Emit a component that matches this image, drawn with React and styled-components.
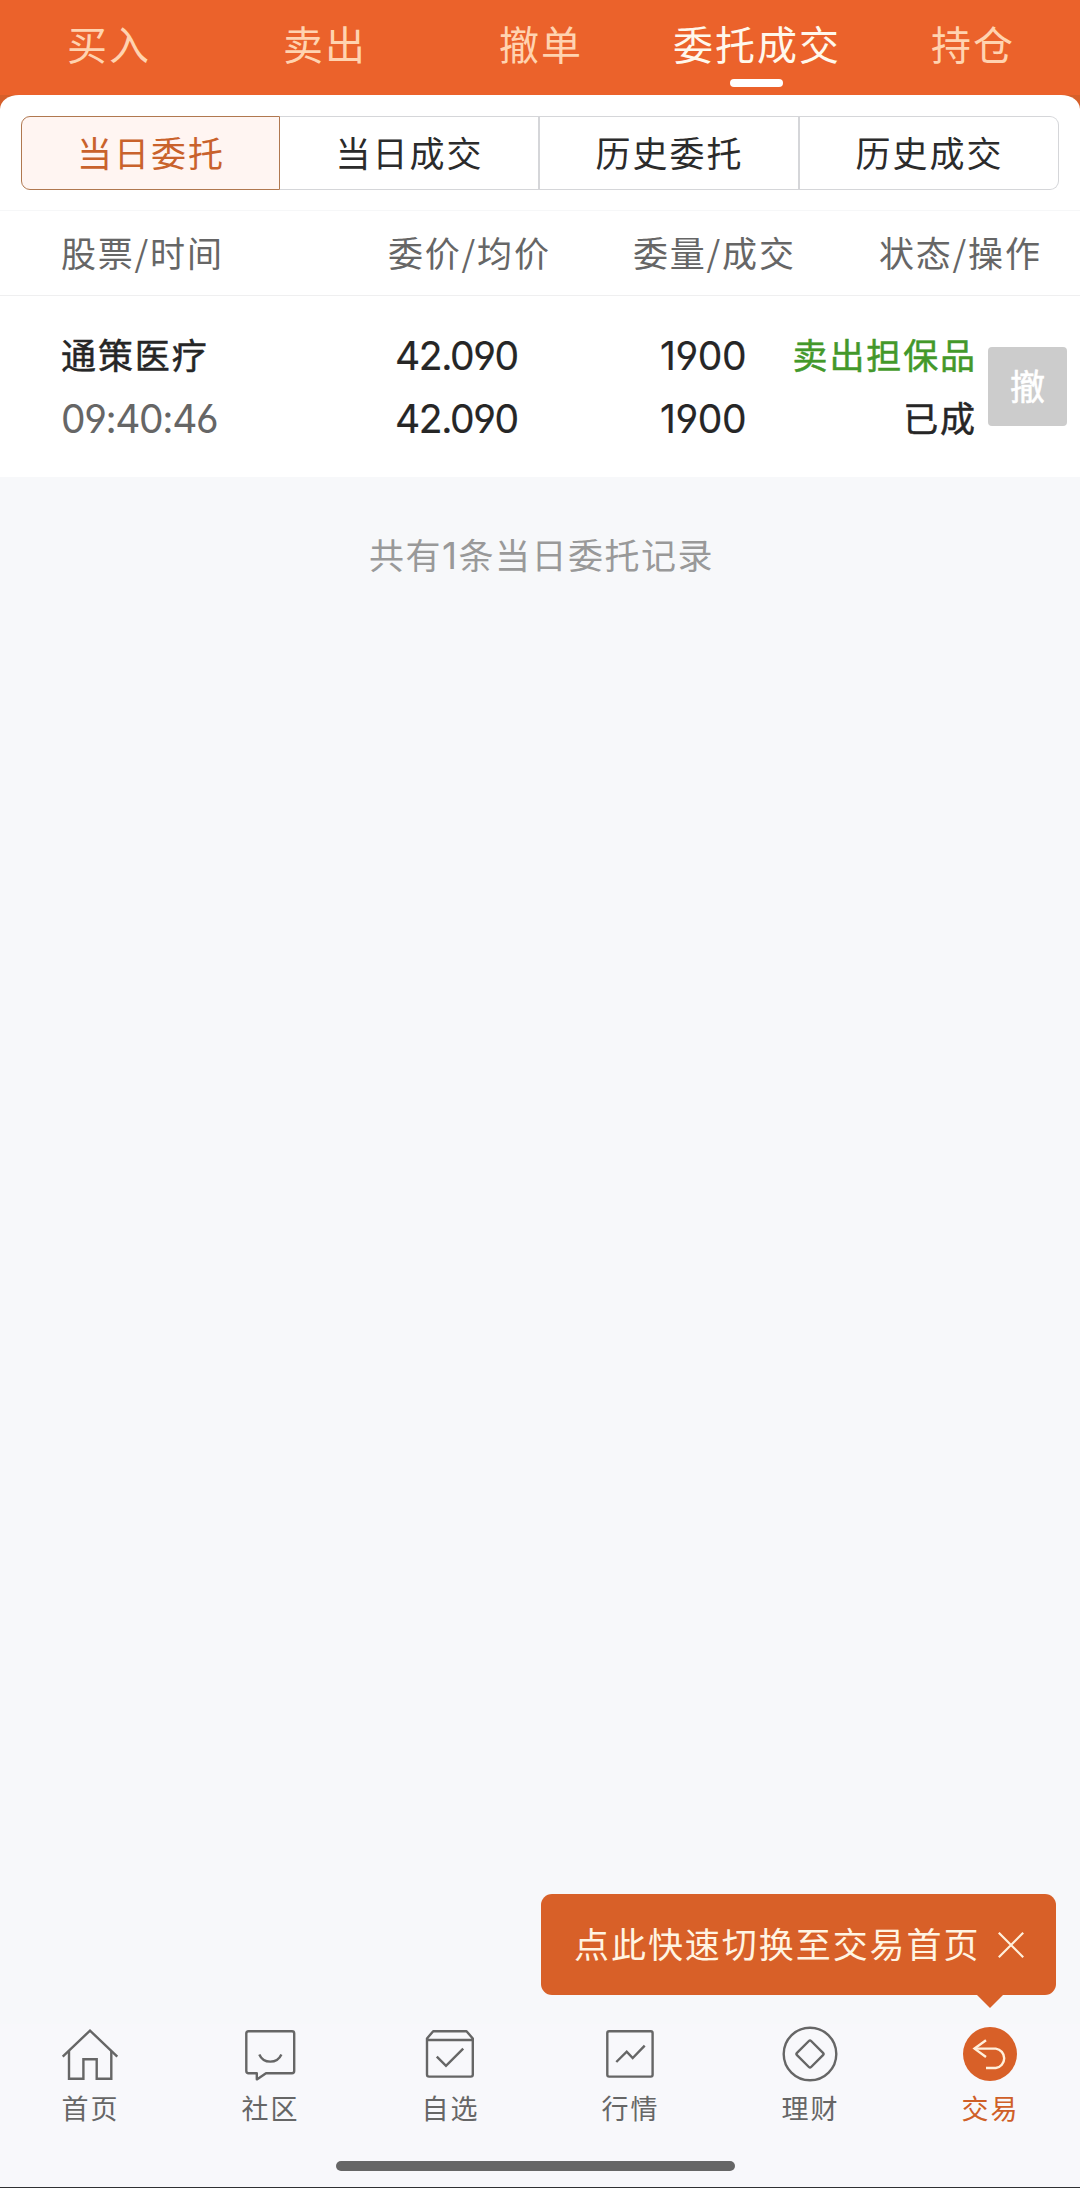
import React, { useState } from 'react'
import styled, { createGlobalStyle } from 'styled-components'

const GlobalStyle = createGlobalStyle`
    * {
        box-sizing: border-box;
    }

    body {
        margin: 0;
        background-color: #f7f8fa;
        font-family: "Noto Sans CJK SC", sans-serif;
    }
`

const Page = styled.div`
    display: flex;
    flex-direction: column;
    width: 1080px;
    height: 2188px;
    overflow: hidden;
    background-color: #f7f8fa;
    border-bottom: 1px solid #303133;
`

const TopTabs = styled.nav`
    display: grid;
    grid-template-columns: repeat(5, 1fr);
    height: 95px;
    background-color: #eb622b;
`

const TopTab = styled.button`
    display: flex;
    flex-direction: column;
    align-items: center;
    border: 0;
    padding: 13px 0 0;
    background: none;
    color: ${({ $active }) => ($active ? '#fff8ec' : '#ffd3b0')};
    font: 400 40px/60px "Noto Sans CJK SC", sans-serif;
    letter-spacing: 2px;
    white-space: nowrap;

    span {
        padding-left: 2px;
    }

    &::after {
        content: '';
        width: 53px;
        height: 8px;
        margin-top: 6px;
        border-radius: 4px;
        background-color: ${({ $active }) => ($active ? '#fff' : 'transparent')};
    }
`

const SheetBack = styled.div`
    background: linear-gradient(#d65f2a 14px, #fff 14px);
`

const Sheet = styled.main`
    height: 382px;
    padding-top: 21px;
    border-radius: 19px 19px 0 0 / 14px 14px 0 0;
    background-color: #fff;
`

const Segments = styled.div`
    display: grid;
    grid-template-columns: 259px 260px 260px 259px;
    height: 74px;
    margin: 0 21px 20px;
`

const Segment = styled.button`
    border: 1px solid ${({ $active }) => ($active ? '#b07850' : '#d5d6d9')};
    border-left-width: ${({ $first }) => ($first ? '1px' : '0')};
    border-right-width: ${({ $first, $last }) => ($first || $last ? '1px' : '2px')};
    border-radius: ${({ $first, $last }) => ($first ? '9px 0 0 9px' : $last ? '0 9px 9px 0' : '0')};
    padding: 0 0 3px 1px;
    background-color: ${({ $active }) => ($active ? '#fff5f2' : '#fff')};
    color: ${({ $active }) => ($active ? '#c9622c' : '#2b2b2b')};
    font: 400 35px/52px "Noto Sans CJK SC", sans-serif;
    letter-spacing: 2px;
`

const TableHead = styled.div`
    display: grid;
    grid-template-columns: 327px 245px 246px 1fr;
    align-items: center;
    height: 86px;
    padding: 0 0 3px 61px;
    border-top: 1px solid #f6f7f8;
    border-bottom: 1px solid #efeff0;
    color: #666;
    font-size: 35px;
    line-height: 52px;
    letter-spacing: 1.8px;
    white-space: nowrap;
`

const OrderRow = styled.div`
    display: grid;
    grid-template-columns: 334px 265px 1fr auto 79px;
    padding: 26px 13px 0 61px;
`

const Cell = styled.div`
    display: flex;
    flex-direction: column;
    align-items: ${({ $right }) => ($right ? 'flex-end' : 'flex-start')};
    padding-right: ${({ $right }) => ($right ? '11px' : '0')};
`

const Label = styled.span`
    height: 63px;
    color: ${({ $color }) => $color || '#262626'};
    font-size: 35px;
    line-height: 63px;
    letter-spacing: 1.9px;
    -webkit-text-stroke: 0.5px currentColor;
    white-space: nowrap;
`

const Figure = styled.span`
    height: 63px;
    padding-top: 2px;
    color: ${({ $muted }) => ($muted ? '#666' : '#262626')};
    font-family: Inter, sans-serif;
    font-feature-settings: "cv03", "cv04";
    font-size: 39px;
    font-weight: 400;
    -webkit-text-stroke: ${({ $muted }) => ($muted ? '0' : '0.2px currentColor')};
    line-height: 63px;
    letter-spacing: ${({ $tight }) => ($tight ? '-1.4px' : '-0.4px')};
    white-space: nowrap;
`

const CancelButton = styled.button`
    align-self: start;
    width: 79px;
    height: 79px;
    margin-top: 25px;
    border: 0;
    border-radius: 4px;
    padding: 0 0 4px;
    background-color: #ccc;
    color: #fff;
    font: 400 35px/52px "Noto Sans CJK SC", sans-serif;
    -webkit-text-stroke: 0.6px currentColor;
`

const Summary = styled.p`
    margin: 51px 0 0;
    padding-left: 3px;
    color: #999;
    font-size: 35px;
    line-height: 52px;
    letter-spacing: 1.5px;
    text-align: center;

    span {
        font-family: Inter, sans-serif;
        font-size: 37px;
        line-height: 1;
    }
`

const Footer = styled.footer`
    display: flex;
    flex-direction: column;
    margin-top: auto;
    background-color: #f8f8fb;
`

const Tip = styled.div`
    position: absolute;
    top: 1894px;
    left: 541px;
    display: flex;
    align-items: center;
    width: 515px;
    height: 101px;
    padding: 0 32px 0 33px;
    border-radius: 11px;
    background-color: #d86028;
    color: #fff4e2;

    &::after {
        content: '';
        position: absolute;
        top: 100px;
        left: 435px;
        border: 14px solid transparent;
        border-top-color: #d86028;
        border-bottom: 0;
    }
`

const TipText = styled.span`
    flex: 1;
    padding-bottom: 3px;
    font-size: 35px;
    line-height: 52px;
    letter-spacing: 1.95px;
    white-space: nowrap;
`

const BottomNav = styled.nav`
    display: grid;
    grid-template-columns: repeat(6, 1fr);
    height: 137px;
`

const NavItem = styled.a`
    display: flex;
    flex-direction: column;
    align-items: center;
    color: ${({ $active }) => ($active ? '#cf5f28' : '#666')};
    font-size: 27px;
    line-height: 40px;
    letter-spacing: 2px;

    span {
        padding: 4px 0 0 1px;
    }
`

const Icon = styled.svg`
    width: 60px;
    height: 60px;
    fill: none;
    stroke: #666;
    stroke-width: 2.4;
`

const HomeIndicator = styled.div`
    width: 399px;
    height: 10px;
    margin: 0 auto 16px 336px;
    border-radius: 5px;
    background-color: #666;
`

const HomeIcon = () => (
    <Icon viewBox="0 0 60 60">
        <path d="M2.7 32.7 30 6.6 57.3 32.7" />
        <path d="M9 27V54.8H23.4V35.2H36.7V54.8H51.3V27" />
    </Icon>
)

const CommunityIcon = () => (
    <Icon viewBox="0 0 60 60" strokeLinejoin="round">
        <path d="M8.5 7.2H52Q54.2 7.2 54.2 9.4V47Q54.2 49.2 52 49.2H26L17.2 55.2H16.8V49.2H8.5Q6.3 49.2 6.3 47V9.4Q6.3 7.2 8.5 7.2Z" />
        <path d="M19.3 30.4C23.5 40 37 40 41.4 30.4" />
    </Icon>
)

const WatchlistIcon = () => (
    <Icon viewBox="0 0 60 60" strokeLinejoin="round">
        <path d="M7 16V50.5Q7 52.6 9.1 52.6H50.7Q52.8 52.6 52.8 50.5V14.5L46.5 7.2H13.2L7 14.5V16H52.8" />
        <path d="M16.8 32.7 26 41.9 43.2 24.6" strokeLinejoin="miter" />
    </Icon>
)

const MarketIcon = () => (
    <Icon viewBox="0 0 60 60">
        <rect x="7.3" y="7.3" width="45.3" height="45.3" rx="1.8" />
        <path d="M16.3 38 26.7 27.6 32.7 34 44.7 21.7" />
    </Icon>
)

const WealthIcon = () => (
    <Icon viewBox="0 0 60 60">
        <circle cx="30" cy="30" r="26.3" />
        <rect x="20" y="20" width="20" height="20" rx="1.6" transform="rotate(45 30 30)" />
    </Icon>
)

const TradeIcon = () => (
    <Icon viewBox="0 0 60 60">
        <circle cx="30" cy="30" r="27" fill="#d86028" stroke="none" />
        <path d="M26 16.3 14.5 24.6 26 33" stroke="#fff0dc" />
        <path d="M14.5 24.6H35.8A9.8 9.8 0 0 1 35.8 44H26" stroke="#fff0dc" />
    </Icon>
)

const CloseIcon = styled.svg`
    width: 26px;
    height: 26px;
    stroke: #fff0dc;
    stroke-width: 2.2;
`

const topTabs = ['买入', '卖出', '撤单', '委托成交', '持仓']
const segments = ['当日委托', '当日成交', '历史委托', '历史成交']
const columns = ['股票/时间', '委价/均价', '委量/成交', '状态/操作']
const navItems = [
    { label: '首页', icon: HomeIcon },
    { label: '社区', icon: CommunityIcon },
    { label: '自选', icon: WatchlistIcon },
    { label: '行情', icon: MarketIcon },
    { label: '理财', icon: WealthIcon },
    { label: '交易', icon: TradeIcon }
]

const orders = [
    {
        name: '通策医疗',
        time: '09:40:46',
        price: '42.090',
        average: '42.090',
        amount: '1900',
        filled: '1900',
        side: '卖出担保品',
        status: '已成'
    }
]

const App = () => {
    const [tab, setTab] = useState(3)
    const [segment, setSegment] = useState(0)
    const [tipOpen, setTipOpen] = useState(true)

    return (
        <Page>
            <GlobalStyle />
            <TopTabs>
                {topTabs.map((name, i) => (
                    <TopTab key={name} $active={i === tab} onClick={() => setTab(i)}>
                        <span>{name}</span>
                    </TopTab>
                ))}
            </TopTabs>
            <SheetBack>
                <Sheet>
                    <Segments>
                        {segments.map((name, i) => (
                            <Segment
                                key={name}
                                $active={i === segment}
                                $first={i === 0}
                                $last={i === segments.length - 1}
                                onClick={() => setSegment(i)}
                            >
                                {name}
                            </Segment>
                        ))}
                    </Segments>
                    <TableHead>
                        {columns.map((name) => <span key={name}>{name}</span>)}
                    </TableHead>
                    {orders.map((order) => (
                        <OrderRow key={order.time}>
                            <Cell>
                                <Label>{order.name}</Label>
                                <Figure $muted $tight>{order.time}</Figure>
                            </Cell>
                            <Cell>
                                <Figure $tight>{order.price}</Figure>
                                <Figure $tight>{order.average}</Figure>
                            </Cell>
                            <Cell>
                                <Figure>{order.amount}</Figure>
                                <Figure>{order.filled}</Figure>
                            </Cell>
                            <Cell $right>
                                <Label $color="#43982a">{order.side}</Label>
                                <Label>{order.status}</Label>
                            </Cell>
                            <CancelButton>撤</CancelButton>
                        </OrderRow>
                    ))}
                </Sheet>
            </SheetBack>
            <Summary>
                共有<span>{orders.length}</span>条当日委托记录
            </Summary>
            <Footer>
                {tipOpen && (
                    <Tip>
                        <TipText>点此快速切换至交易首页</TipText>
                        <CloseIcon viewBox="0 0 26 26" onClick={() => setTipOpen(false)}>
                            <path d="M.8.8 25.2 25.2M25.2.8.8 25.2" />
                        </CloseIcon>
                    </Tip>
                )}
                <BottomNav>
                    {navItems.map(({ label, icon: NavIcon }, i) => (
                        <NavItem key={label} $active={i === 5}>
                            <NavIcon />
                            <span>{label}</span>
                        </NavItem>
                    ))}
                </BottomNav>
                <HomeIndicator />
            </Footer>
        </Page>
    )
}

export default App
